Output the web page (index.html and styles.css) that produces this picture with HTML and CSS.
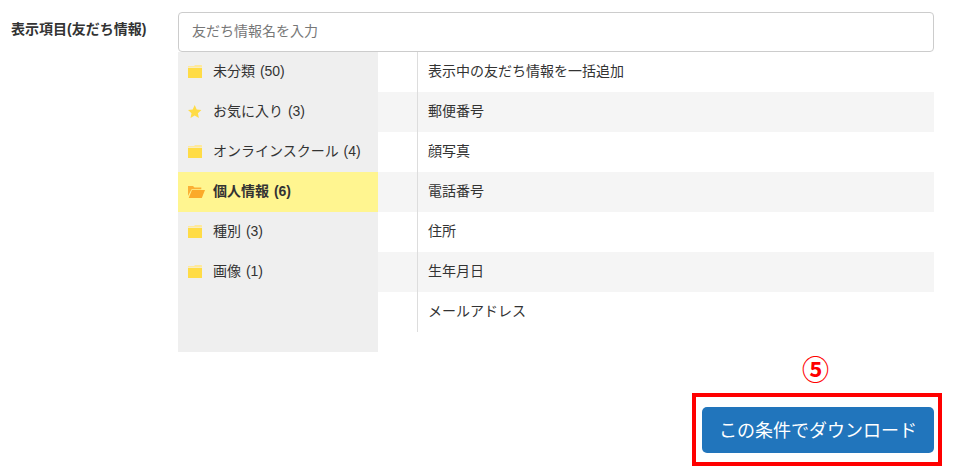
FILE: index.html
```html
<!DOCTYPE html>
<html lang="ja">
<head>
<meta charset="utf-8">
<title>表示項目</title>
<link rel="stylesheet" href="styles.css">
</head>
<body>
<div class="page">
  <div class="field">
    <div class="label">表示項目(友だち情報)</div>
    <div class="control">
      <input class="search" type="text" placeholder="友だち情報名を入力">
      <div class="picker">
        <ul class="folders">
          <li class="folder"><svg class="ico" viewBox="0 0 14 13"><path class="f-tab" d="M0 1h6L7 0h6.3a.7.7 0 0 1 .7.7V2.6H0z"/><path class="f-body" d="M0 3h14V13H0z"/></svg><span>未分類 (50)</span></li>
          <li class="folder"><svg class="ico" viewBox="0 0 14 13"><path class="f-body" d="M6.7 0l2 4.4 4.7.6-3.5 3.2 1 4.8-4.2-2.4L2.5 13l1-4.8L0 5l4.7-.6z"/></svg><span>お気に入り (3)</span></li>
          <li class="folder"><svg class="ico" viewBox="0 0 14 13"><path class="f-tab" d="M0 1h6L7 0h6.3a.7.7 0 0 1 .7.7V2.6H0z"/><path class="f-body" d="M0 3h14V13H0z"/></svg><span>オンラインスクール (4)</span></li>
          <li class="folder active"><svg class="ico" viewBox="0 0 17 13"><path class="o-back" d="M0 11V1h5L6.5 2.5h6.8V4.2H3.6L0 11z"/><path class="o-front" d="M3.9 5H17L13.8 13H0.7z"/></svg><span>個人情報 (6)</span></li>
          <li class="folder"><svg class="ico" viewBox="0 0 14 13"><path class="f-tab" d="M0 1h6L7 0h6.3a.7.7 0 0 1 .7.7V2.6H0z"/><path class="f-body" d="M0 3h14V13H0z"/></svg><span>種別 (3)</span></li>
          <li class="folder"><svg class="ico" viewBox="0 0 14 13"><path class="f-tab" d="M0 1h6L7 0h6.3a.7.7 0 0 1 .7.7V2.6H0z"/><path class="f-body" d="M0 3h14V13H0z"/></svg><span>画像 (1)</span></li>
        </ul>
        <ul class="items">
          <li class="item"><span class="cell">表示中の友だち情報を一括追加</span></li>
          <li class="item"><span class="cell">郵便番号</span></li>
          <li class="item"><span class="cell">顔写真</span></li>
          <li class="item"><span class="cell">電話番号</span></li>
          <li class="item"><span class="cell">住所</span></li>
          <li class="item"><span class="cell">生年月日</span></li>
          <li class="item"><span class="cell">メールアドレス</span></li>
        </ul>
      </div>
    </div>
  </div>
  <div class="actions">
    <div class="step">⑤</div>
    <button class="download" type="button">この条件でダウンロード</button>
    <div class="frame"></div>
  </div>
</div>
</body>
</html>
```
FILE: styles.css
```css
* { box-sizing: border-box; }
html, body { margin: 0; padding: 0; background: #fff; }
body {
  font-family: "Liberation Sans", "Noto Sans CJK JP", sans-serif;
  font-size: 14px;
  color: #333;
  overflow: hidden;
}
.page { width: 959px; height: 472px; padding: 12px 25px 0 11px; }
.field { display: flex; }
.label { width: 167px; font-size: 14px; font-weight: 700; line-height: 34px; }
.control { width: 756px; }
.search {
  display: block;
  width: 100%;
  height: 40px;
  padding: 0 13px 2px;
  border: 1px solid #ccc;
  border-radius: 4px;
  font: inherit;
  color: #333;
  outline: none;
}
.search::placeholder { color: #777; opacity: 1; }
.picker { display: flex; align-items: flex-start; }
ul { list-style: none; margin: 0; padding: 0; }
.folders { width: 200px; height: 300px; background: #efefef; }
.folder { display: flex; align-items: center; height: 40px; padding: 0 0 4px 10px; word-spacing: 1px; }
.folder .ico { width: 14px; height: 13px; margin: 3px 11px 0 0; flex: none; }
.folder.active .ico { width: 17px; margin-right: 8px; }
.active { background: #fff590; font-weight: 700; }
.f-tab { fill: #ffe99a; }
.f-body { fill: #ffdc46; }
.o-back { fill: #fbb034; }
.o-front { fill: #fbaa2a; }
.items { flex: 1; }
.item { height: 40px; padding-left: 39px; }
.item:nth-child(even) { background: #f5f5f5; }
.cell { display: flex; align-items: center; height: 100%; padding: 0 0 4px 10px; border-left: 1px solid #ddd; }
.actions { position: relative; margin-top: 6px; height: 108px; }
.step {
  padding-right: 105px;
  text-align: right;
  color: #f00;
  font-size: 27px;
  font-weight: 700;
  line-height: 26px;
  height: 26px;
}
.download {
  position: absolute;
  right: 0;
  top: 49px;
  width: 232px;
  height: 46px;
  padding: 0 0 3px;
  border: 0;
  border-radius: 5px;
  background: #2175bc;
  color: #fff;
  font: inherit;
  font-size: 18px;
}
.frame {
  position: absolute;
  right: -8px;
  top: 35px;
  width: 250px;
  height: 73px;
  border: 4px solid #f00;
}
```
